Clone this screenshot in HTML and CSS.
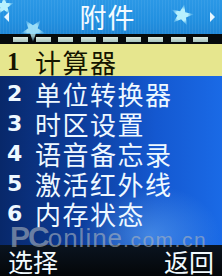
FILE: index.html
```html
<!DOCTYPE html>
<html lang="zh">
<head>
<meta charset="utf-8">
<link rel="stylesheet" href="styles.css">
</head>
<body>
<div class="screen">
  <header class="title-bar">
    <span class="star star-tl"></span>
    <span class="star star-bl"></span>
    <span class="star star-r"></span>
    <span class="arrow arrow-left"></span>
    <h1 class="title">附件</h1>
    <span class="arrow arrow-right"></span>
  </header>
  <div class="strip">
    <span class="dash"></span><span class="dash"></span><span class="dash"></span>
    <span class="dash"></span><span class="dash"></span><span class="dash"></span>
    <span class="dash"></span><span class="dash"></span><span class="dash"></span>
  </div>
  <ul class="menu">
    <li class="item selected"><span class="num">1</span><span class="label">计算器</span></li>
    <li class="item"><span class="num">2</span><span class="label">单位转换器</span></li>
    <li class="item"><span class="num">3</span><span class="label">时区设置</span></li>
    <li class="item"><span class="num">4</span><span class="label">语音备忘录</span></li>
    <li class="item"><span class="num">5</span><span class="label">激活红外线</span></li>
    <li class="item"><span class="num">6</span><span class="label">内存状态</span></li>
  </ul>
  <footer class="softkeys">
    <span class="key">选择</span>
    <span class="key">返回</span>
  </footer>
  <div class="watermark"><span class="wm-pc">PC</span><span class="wm-online">online</span><span class="wm-dom">.com.cn</span></div>
</div>
</body>
</html>
```

FILE: styles.css
```css
* { box-sizing: border-box; }
html, body { margin: 0; padding: 0; background: #000; }
.screen {
  position: relative;
  width: 222px;
  height: 276px;
  overflow: hidden;
  display: flex;
  flex-direction: column;
  font-family: "Noto Sans CJK SC", "Noto Sans", sans-serif;
  background:
    radial-gradient(ellipse 70px 50px at 150px 235px, rgba(120,190,255,0.45), rgba(120,190,255,0) 100%),
    linear-gradient(90deg, #08286a 0%, #0c3c9a 35%, #1458d0 70%, #1a6ae6 100%);
}
.title-bar {
  position: relative;
  height: 34px;
  flex: none;
  display: flex;
  align-items: center;
  justify-content: space-between;
  padding: 0 7px 0 4px;
  background:
    repeating-linear-gradient(90deg, rgba(255,255,255,0.06) 0 1px, rgba(0,0,0,0) 1px 3px),
    linear-gradient(180deg, #2b98e6 0%, #2290e0 60%, #1f86d6 100%);
}
.title {
  margin: 0 0 0 -4px;
  font-size: 27px;
  font-weight: 400;
  line-height: 32px;
  color: #f4fbff;
  letter-spacing: 1px;
  position: relative;
}
.arrow {
  width: 0; height: 0;
  border-top: 5px solid transparent;
  border-bottom: 5px solid transparent;
  position: relative;
}
.arrow-left { border-right: 5px solid #e8f6ff; }
.arrow-right { border-left: 5px solid #e8f6ff; }
.star {
  position: absolute;
  background: radial-gradient(circle, rgba(190,245,255,0.95) 0 35%, rgba(150,220,250,0.5) 55%, rgba(120,200,250,0) 75%);
  clip-path: polygon(50% 0, 61% 35%, 98% 35%, 68% 57%, 79% 91%, 50% 70%, 21% 91%, 32% 57%, 2% 35%, 39% 35%);
}
.star-tl { left: -6px; top: -4px; width: 20px; height: 20px; }
.star-bl { left: 20px; top: 18px; width: 26px; height: 24px; transform: rotate(180deg); opacity: 0.8; }
.star-r { left: 170px; top: 4px; width: 24px; height: 22px; transform: rotate(12deg); }
.strip {
  height: 10px;
  flex: none;
  background: #060a0c;
  display: flex;
  align-items: center;
  gap: 7.5px;
  padding-left: 13px;
}
.dash {
  width: 15px;
  height: 5px;
  background: linear-gradient(180deg, #d8e8e0 0%, #a8c4bc 100%);
}
.menu {
  list-style: none;
  margin: 0;
  padding: 0;
  flex: 1;
  display: flex;
  flex-direction: column;
}
.item {
  height: 30px;
  flex: none;
  display: flex;
  align-items: center;
  padding: 5px 0 0 7px;
  color: #eef8ff;
  font-size: 26px;
  line-height: 1;
}
.item.selected {
  height: 32px;
  padding-top: 3px;
  background: #e6e68e;
  color: #141400;
}
.num {
  width: 28px;
  font-family: "DejaVu Sans", sans-serif;
  font-weight: 700;
  font-size: 22px;
}
.selected .num {
  font-family: "Liberation Serif", serif;
  font-size: 25px;
}
.label { letter-spacing: 1.5px; }
.softkeys {
  height: 31px;
  flex: none;
  display: flex;
  justify-content: space-between;
  align-items: center;
  padding: 1px 8px 0 8px;
  background: linear-gradient(180deg, #0a1420 0%, #040608 100%);
  color: #f2fbff;
  font-size: 25px;
  line-height: 29px;
}
.watermark {
  position: absolute;
  left: 10px;
  top: 222px;
  color: rgba(170,180,190,0.6);
  font-family: "Liberation Sans", Arial, sans-serif;
  white-space: nowrap;
  line-height: 30px;
}
.wm-pc { font-size: 30px; font-weight: 700; letter-spacing: -2px; }
.wm-online { font-size: 26px; letter-spacing: 1px; }
.wm-dom { font-size: 21px; letter-spacing: 1.5px; }
```
